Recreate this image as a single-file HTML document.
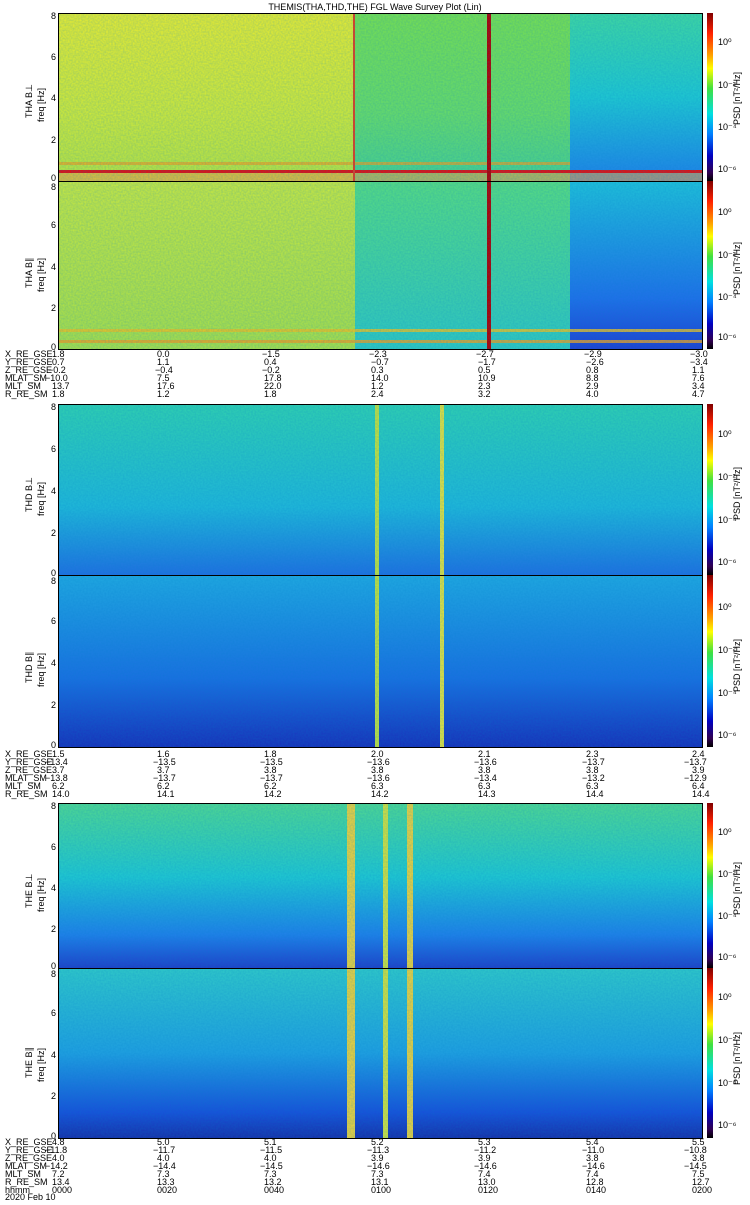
<!DOCTYPE html>
<html><head><meta charset="utf-8"><style>
body{margin:0;background:#fff;width:750px;height:1200px;overflow:hidden}
svg text{font-family:"Liberation Sans",sans-serif;font-size:9px;fill:#000}
</style></head><body>
<svg width="750" height="1200" viewBox="0 0 750 1200" xmlns="http://www.w3.org/2000/svg">
<defs>
<linearGradient id="cb" x1="0" y1="0" x2="0" y2="1">
<stop offset="0" stop-color="#800000"/><stop offset="0.12" stop-color="#ff2000"/><stop offset="0.25" stop-color="#ffa000"/><stop offset="0.33" stop-color="#ffff00"/><stop offset="0.45" stop-color="#40e040"/><stop offset="0.6" stop-color="#00e0e0"/><stop offset="0.72" stop-color="#0080ff"/><stop offset="0.85" stop-color="#0000c0"/><stop offset="0.95" stop-color="#300050"/><stop offset="1" stop-color="#000"/>
</linearGradient>
<linearGradient id="yel" x1="0" y1="0" x2="0" y2="1"><stop offset="0" stop-color="#e8ec30"/><stop offset="0.6" stop-color="#d0ea38"/><stop offset="1" stop-color="#b8e440"/></linearGradient>
<linearGradient id="grn" x1="0" y1="0" x2="0" y2="1"><stop offset="0" stop-color="#78e050"/><stop offset="0.6" stop-color="#68dc68"/><stop offset="1" stop-color="#48d090"/></linearGradient>
<linearGradient id="cyb" x1="0" y1="0" x2="0" y2="1"><stop offset="0" stop-color="#40d8a0"/><stop offset="0.5" stop-color="#20c8d0"/><stop offset="1" stop-color="#2080e8"/></linearGradient>
<linearGradient id="yel2" x1="0" y1="0" x2="0" y2="1"><stop offset="0" stop-color="#c8e840"/><stop offset="1" stop-color="#a8e048"/></linearGradient>
<linearGradient id="grn2" x1="0" y1="0" x2="0" y2="1"><stop offset="0" stop-color="#58dc80"/><stop offset="1" stop-color="#30c8c0"/></linearGradient>
<linearGradient id="blu2" x1="0" y1="0" x2="0" y2="1"><stop offset="0" stop-color="#20c0d8"/><stop offset="0.7" stop-color="#2070e8"/><stop offset="1" stop-color="#2040d0"/></linearGradient>
<linearGradient id="thd1" x1="0" y1="0" x2="0" y2="1"><stop offset="0" stop-color="#30d0b0"/><stop offset="0.6" stop-color="#20b8d8"/><stop offset="1" stop-color="#2070e0"/></linearGradient>
<linearGradient id="thd2" x1="0" y1="0" x2="0" y2="1"><stop offset="0" stop-color="#20a8e0"/><stop offset="0.6" stop-color="#1a70e0"/><stop offset="1" stop-color="#1830b8"/></linearGradient>
<linearGradient id="the1" x1="0" y1="0" x2="0" y2="1"><stop offset="0" stop-color="#50d890"/><stop offset="0.45" stop-color="#20c8d0"/><stop offset="0.8" stop-color="#2080e8"/><stop offset="1" stop-color="#2040c8"/></linearGradient>
<linearGradient id="the2" x1="0" y1="0" x2="0" y2="1"><stop offset="0" stop-color="#30c8c8"/><stop offset="0.5" stop-color="#20a0e0"/><stop offset="0.85" stop-color="#1850d8"/><stop offset="1" stop-color="#1830a8"/></linearGradient>
<filter id="nz" x="0" y="0" width="1" height="1" filterUnits="objectBoundingBox"><feTurbulence type="fractalNoise" baseFrequency="0.6" numOctaves="1" seed="3"/><feColorMatrix values="0 0 0 0 0  0 0 0 0 0.2  0 0 0 0 0.6  0 0 0 0.35 -0.05"/></filter>
</defs>
<text x="375" y="10" text-anchor="middle">THEMIS(THA,THD,THE) FGL Wave Survey Plot (Lin)</text>

<rect x="58" y="13" width="297" height="168" fill="url(#yel)"/>
<rect x="355" y="13" width="215" height="168" fill="url(#grn)"/>
<rect x="570" y="13" width="132" height="168" fill="url(#cyb)"/>
<rect x="58" y="162" width="512" height="3" fill="#f0a020" opacity="0.7"/>
<rect x="58" y="170" width="644" height="3" fill="#e01010"/>
<rect x="58" y="173" width="644" height="8" fill="#f0a040" opacity="0.6"/>
<rect x="353" y="13" width="2" height="168" fill="#e04020"/>
<rect x="487" y="13" width="4" height="168" fill="#b00000"/>
<rect x="58" y="181" width="297" height="168" fill="url(#yel2)"/>
<rect x="355" y="181" width="215" height="168" fill="url(#grn2)"/>
<rect x="570" y="181" width="132" height="168" fill="url(#blu2)"/>
<rect x="58" y="329" width="644" height="3" fill="#f0c020" opacity="0.8"/>
<rect x="58" y="340" width="644" height="3" fill="#f0a020" opacity="0.8"/>
<rect x="487" y="181" width="4" height="168" fill="#b00000"/>
<rect x="58" y="404" width="644" height="171" fill="url(#thd1)"/>
<rect x="58" y="575" width="644" height="172" fill="url(#thd2)"/>
<rect x="375" y="404" width="4" height="343" fill="#c0e040"/>
<rect x="440" y="404" width="4" height="343" fill="#e0e040"/>
<rect x="58" y="803" width="644" height="165" fill="url(#the1)"/>
<rect x="58" y="968" width="644" height="170" fill="url(#the2)"/>
<rect x="347" y="803" width="8" height="335" fill="#e8d040"/>
<rect x="383" y="803" width="5" height="335" fill="#d0e040"/>
<rect x="407" y="803" width="6" height="335" fill="#e8d040"/>
<rect x="58" y="13" width="644" height="336" filter="url(#nz)"/>
<rect x="58" y="404" width="644" height="343" filter="url(#nz)"/>
<rect x="58" y="803" width="644" height="335" filter="url(#nz)"/>

<g fill="none" stroke="#000" stroke-width="1">
<rect x="58.5" y="13.5" width="644" height="336"/><line x1="58" y1="181.5" x2="702" y2="181.5"/>
<rect x="58.5" y="404.5" width="644" height="343"/><line x1="58" y1="575.5" x2="702" y2="575.5"/>
<rect x="58.5" y="803.5" width="644" height="335"/><line x1="58" y1="968.5" x2="702" y2="968.5"/>
</g>
<g>
<rect x="707" y="13" width="6" height="168" fill="url(#cb)"/><rect x="707" y="181" width="6" height="168" fill="url(#cb)"/>
<rect x="707" y="404" width="6" height="171" fill="url(#cb)"/><rect x="707" y="575" width="6" height="172" fill="url(#cb)"/>
<rect x="707" y="803" width="6" height="165" fill="url(#cb)"/><rect x="707" y="968" width="6" height="170" fill="url(#cb)"/>
</g>
<g font-size="8">
<text x="718" y="45">10⁰</text><text x="718" y="88">10⁻²</text><text x="718" y="130">10⁻⁴</text><text x="718" y="172">10⁻⁶</text>
<text x="718" y="215">10⁰</text><text x="718" y="258">10⁻²</text><text x="718" y="300">10⁻⁴</text><text x="718" y="340">10⁻⁶</text>
<text x="718" y="437">10⁰</text><text x="718" y="480">10⁻²</text><text x="718" y="523">10⁻⁴</text><text x="718" y="565">10⁻⁶</text>
<text x="718" y="610">10⁰</text><text x="718" y="653">10⁻²</text><text x="718" y="696">10⁻⁴</text><text x="718" y="738">10⁻⁶</text>
<text x="718" y="835">10⁰</text><text x="718" y="877">10⁻²</text><text x="718" y="919">10⁻⁴</text><text x="718" y="960">10⁻⁶</text>
<text x="718" y="1000">10⁰</text><text x="718" y="1043">10⁻²</text><text x="718" y="1086">10⁻⁴</text><text x="718" y="1128">10⁻⁶</text>
</g>
<g font-size="8">
<text transform="translate(740,125) rotate(-90)">PSD [nT²/Hz]</text><text transform="translate(740,295) rotate(-90)">PSD [nT²/Hz]</text>
<text transform="translate(740,520) rotate(-90)">PSD [nT²/Hz]</text><text transform="translate(740,692) rotate(-90)">PSD [nT²/Hz]</text>
<text transform="translate(740,915) rotate(-90)">PSD [nT²/Hz]</text><text transform="translate(740,1085) rotate(-90)">PSD [nT²/Hz]</text>
</g>
<g font-size="8">
<text transform="translate(32,118) rotate(-90)">THA B⊥</text><text transform="translate(44,122) rotate(-90)">freq [Hz]</text>
<text transform="translate(32,288) rotate(-90)">THA B∥</text><text transform="translate(44,292) rotate(-90)">freq [Hz]</text>
<text transform="translate(32,512) rotate(-90)">THD B⊥</text><text transform="translate(44,516) rotate(-90)">freq [Hz]</text>
<text transform="translate(32,683) rotate(-90)">THD B∥</text><text transform="translate(44,687) rotate(-90)">freq [Hz]</text>
<text transform="translate(32,908) rotate(-90)">THE B⊥</text><text transform="translate(44,912) rotate(-90)">freq [Hz]</text>
<text transform="translate(32,1078) rotate(-90)">THE B∥</text><text transform="translate(44,1082) rotate(-90)">freq [Hz]</text>
</g>
<g font-size="8" text-anchor="end">
<text x="56" y="19">8</text><text x="56" y="60">6</text><text x="56" y="101">4</text><text x="56" y="143">2</text><text x="56" y="181">0</text>
<text x="56" y="190">8</text><text x="56" y="228">6</text><text x="56" y="270">4</text><text x="56" y="311">2</text><text x="56" y="350">0</text>
<text x="56" y="410">8</text><text x="56" y="452">6</text><text x="56" y="494">4</text><text x="56" y="536">2</text><text x="56" y="576">0</text>
<text x="56" y="584">8</text><text x="56" y="624">6</text><text x="56" y="666">4</text><text x="56" y="708">2</text><text x="56" y="748">0</text>
<text x="56" y="809">8</text><text x="56" y="850">6</text><text x="56" y="891">4</text><text x="56" y="932">2</text><text x="56" y="969">0</text>
<text x="56" y="977">8</text><text x="56" y="1016">6</text><text x="56" y="1058">4</text><text x="56" y="1099">2</text><text x="56" y="1139">0</text>
</g>
<g font-size="8">
<text x="5" y="357">X_RE_GSE</text><text x="5" y="365">Y_RE_GSE</text><text x="5" y="373">Z_RE_GSE</text><text x="5" y="381">MLAT_SM</text><text x="5" y="389">MLT_SM</text><text x="5" y="397">R_RE_SM</text>
<text x="52" y="357">1.8</text><text x="52" y="365">0.7</text><text x="48" y="373">−0.2</text><text x="45" y="381">−10.0</text><text x="52" y="389">13.7</text><text x="52" y="397">1.8</text>
<text x="157" y="357">0.0</text><text x="157" y="365">1.1</text><text x="155" y="373">−0.4</text><text x="157" y="381">7.5</text><text x="157" y="389">17.6</text><text x="157" y="397">1.2</text>
<text x="262" y="357">−1.5</text><text x="264" y="365">0.4</text><text x="262" y="373">−0.2</text><text x="264" y="381">17.8</text><text x="264" y="389">22.0</text><text x="264" y="397">1.8</text>
<text x="369" y="357">−2.3</text><text x="371" y="365">−0.7</text><text x="371" y="373">0.3</text><text x="371" y="381">14.0</text><text x="371" y="389">1.2</text><text x="371" y="397">2.4</text>
<text x="476" y="357">−2.7</text><text x="478" y="365">−1.7</text><text x="478" y="373">0.5</text><text x="478" y="381">10.9</text><text x="478" y="389">2.3</text><text x="478" y="397">3.2</text>
<text x="584" y="357">−2.9</text><text x="586" y="365">−2.6</text><text x="586" y="373">0.8</text><text x="586" y="381">8.8</text><text x="586" y="389">2.9</text><text x="586" y="397">4.0</text>
<text x="690" y="357">−3.0</text><text x="690" y="365">−3.4</text><text x="692" y="373">1.1</text><text x="692" y="381">7.6</text><text x="692" y="389">3.4</text><text x="692" y="397">4.7</text>

<text x="5" y="757">X_RE_GSE</text><text x="5" y="765">Y_RE_GSE</text><text x="5" y="773">Z_RE_GSE</text><text x="5" y="781">MLAT_SM</text><text x="5" y="789">MLT_SM</text><text x="5" y="797">R_RE_SM</text>
<text x="52" y="757">1.5</text><text x="45" y="765">−13.4</text><text x="52" y="773">3.7</text><text x="45" y="781">−13.8</text><text x="52" y="789">6.2</text><text x="52" y="797">14.0</text>
<text x="157" y="757">1.6</text><text x="153" y="765">−13.5</text><text x="157" y="773">3.7</text><text x="153" y="781">−13.7</text><text x="157" y="789">6.2</text><text x="157" y="797">14.1</text>
<text x="264" y="757">1.8</text><text x="260" y="765">−13.5</text><text x="264" y="773">3.8</text><text x="260" y="781">−13.7</text><text x="264" y="789">6.2</text><text x="264" y="797">14.2</text>
<text x="371" y="757">2.0</text><text x="367" y="765">−13.6</text><text x="371" y="773">3.8</text><text x="367" y="781">−13.6</text><text x="371" y="789">6.3</text><text x="371" y="797">14.2</text>
<text x="478" y="757">2.1</text><text x="474" y="765">−13.6</text><text x="478" y="773">3.8</text><text x="474" y="781">−13.4</text><text x="478" y="789">6.3</text><text x="478" y="797">14.3</text>
<text x="586" y="757">2.3</text><text x="582" y="765">−13.7</text><text x="586" y="773">3.8</text><text x="582" y="781">−13.2</text><text x="586" y="789">6.3</text><text x="586" y="797">14.4</text>
<text x="692" y="757">2.4</text><text x="684" y="765">−13.7</text><text x="692" y="773">3.9</text><text x="684" y="781">−12.9</text><text x="692" y="789">6.4</text><text x="692" y="797">14.4</text>

<text x="5" y="1145">X_RE_GSE</text><text x="5" y="1153">Y_RE_GSE</text><text x="5" y="1161">Z_RE_GSE</text><text x="5" y="1169">MLAT_SM</text><text x="5" y="1177">MLT_SM</text><text x="5" y="1185">R_RE_SM</text><text x="5" y="1193">hhmm</text><text x="5" y="1200">2020 Feb 10</text>
<text x="52" y="1145">4.8</text><text x="45" y="1153">−11.8</text><text x="52" y="1161">4.0</text><text x="45" y="1169">−14.2</text><text x="52" y="1177">7.2</text><text x="52" y="1185">13.4</text><text x="52" y="1193">0000</text>
<text x="157" y="1145">5.0</text><text x="153" y="1153">−11.7</text><text x="157" y="1161">4.0</text><text x="153" y="1169">−14.4</text><text x="157" y="1177">7.3</text><text x="157" y="1185">13.3</text><text x="157" y="1193">0020</text>
<text x="264" y="1145">5.1</text><text x="260" y="1153">−11.5</text><text x="264" y="1161">4.0</text><text x="260" y="1169">−14.5</text><text x="264" y="1177">7.3</text><text x="264" y="1185">13.2</text><text x="264" y="1193">0040</text>
<text x="371" y="1145">5.2</text><text x="367" y="1153">−11.3</text><text x="371" y="1161">3.9</text><text x="367" y="1169">−14.6</text><text x="371" y="1177">7.3</text><text x="371" y="1185">13.1</text><text x="371" y="1193">0100</text>
<text x="478" y="1145">5.3</text><text x="474" y="1153">−11.2</text><text x="478" y="1161">3.9</text><text x="474" y="1169">−14.6</text><text x="478" y="1177">7.4</text><text x="478" y="1185">13.0</text><text x="478" y="1193">0120</text>
<text x="586" y="1145">5.4</text><text x="582" y="1153">−11.0</text><text x="586" y="1161">3.8</text><text x="582" y="1169">−14.6</text><text x="586" y="1177">7.4</text><text x="586" y="1185">12.8</text><text x="586" y="1193">0140</text>
<text x="692" y="1145">5.5</text><text x="684" y="1153">−10.8</text><text x="692" y="1161">3.8</text><text x="684" y="1169">−14.5</text><text x="692" y="1177">7.5</text><text x="692" y="1185">12.7</text><text x="692" y="1193">0200</text>
</g>
</svg>
</body></html>
